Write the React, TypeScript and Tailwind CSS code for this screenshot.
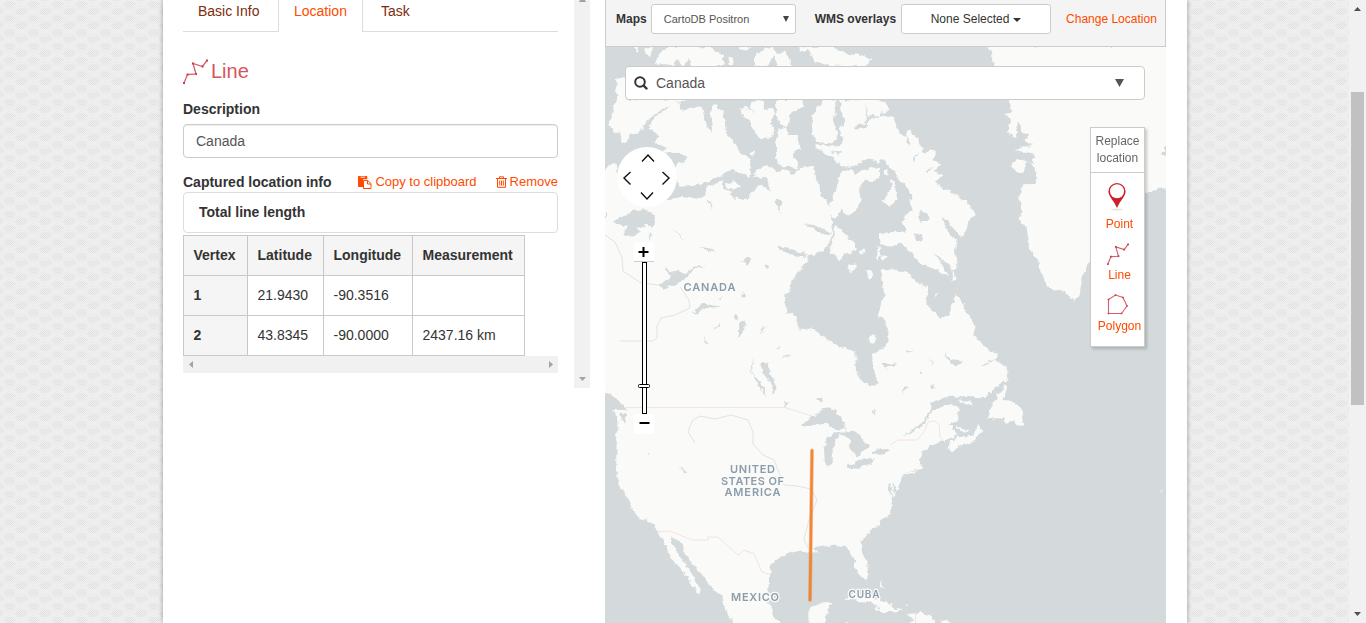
import React from "react";

const LAND = "#fafaf8";
const WATER = "#d4dadc";

type TileProps = { x: number; y: number; w: number; h: number; base: string; children: React.ReactNode };

function Tile({ x, y, w, h, base, children }: TileProps) {
  return (
    <svg x={x} y={y} width={w} height={h} viewBox={`0 0 ${w * 3} ${h * 3}`} overflow="hidden">
      <rect width={w * 3} height={h * 3} fill={base} />
      {children}
    </svg>
  );
}

const L = ({ d }: { d: string }) => <path d={d} fill={LAND} />;
const W = ({ d }: { d: string }) => <path d={d} fill={WATER} />;

function BaseMap() {
  return (
    <svg className="block" width="561" height="576" viewBox="605 47 561 576">
      <defs>
        <filter id="coast" filterUnits="userSpaceOnUse" x="590" y="30" width="590" height="610">
          <feTurbulence type="fractalNoise" baseFrequency="0.16" numOctaves="3" seed="4" />
          <feDisplacementMap in="SourceGraphic" scale="6" xChannelSelector="R" yChannelSelector="G" />
        </filter>
      </defs>
      <rect x="600" y="40" width="570" height="590" fill={WATER} />
      <g filter="url(#coast)">
        <Tile x={600} y={0} w={280} h={200} base={WATER}>
          <L d="M100 140L118 140L112 158ZM138 142L160 142L150 170L135 160ZM165 192L172 170L200 140L335 140L345 156L372 165L372 198L275 198L270 178L248 195L230 178L215 198ZM385 176L395 170L402 188L394 198L385 190ZM462 170L490 150L510 140L535 162L552 155L575 180L575 205L535 200L520 165L505 200L462 200ZM418 140L455 140L435 155ZM598 140L700 140L740 165L770 160L815 180L790 198L700 200L650 185L620 150L600 158Z" />
          <L d="M45 240L77 235L80 300L262 298L225 310L170 338L140 362L130 385L115 402L95 400L70 432L60 400L25 380L38 335L50 290Z" />
          <L d="M145 385L165 348L200 330L218 310L235 308L245 330L290 320L305 320L318 370L334 402L338 370L330 328L345 312L370 335L378 395L400 425L420 460L450 475L452 530L425 520L400 510L375 515L350 535L320 545L270 558L235 560L225 500L265 472L235 455L190 458L205 440L165 430L180 410Z" />
          <L d="M422 325L440 320L465 345L450 320L462 302L490 300L495 330L515 320L525 340L510 370L525 380L520 410L485 418L465 395L450 360L425 345ZM528 300L610 300L612 320L575 335L572 352L560 382L545 375L530 350ZM555 382L568 405L588 405L600 445L575 465L595 485L590 512L575 500L550 502L525 475L535 450L525 425L535 390Z" />
          <L d="M650 320L675 300L710 298L700 370L715 402L700 430L680 432L650 425L638 405L635 365ZM720 300L840 295L840 485L800 480L775 490L755 505L710 490L695 470L650 445L650 432L690 440L720 435L728 410L715 378L728 350Z" />
          <L d="M0 520L45 485L52 520L100 610L0 610ZM180 610L240 588L300 595L325 570L340 555L368 542L370 570L390 575L400 595L440 600L455 570L485 555L510 570L500 535L465 530L468 510L500 495L530 512L555 508L580 525L600 505L640 498L645 535L660 550L668 590L690 610L705 580L718 540L725 515L750 510L765 525L785 510L840 500L840 535L815 545L795 540L775 575L790 610Z" />
          <L d="M318 565L345 550L362 552L345 570L322 575ZM378 552L405 545L420 560L400 570L380 565ZM450 455L462 452L460 466L450 466ZM535 548L560 540L570 560L545 575Z" />
          <W d="M708 350L735 350L732 380L708 372ZM795 310L805 350L840 345L808 362L790 380L800 352ZM690 450L730 458L710 465ZM760 380L790 372L805 378L770 388Z" />
        </Tile>
        <Tile x={880} y={0} w={290} h={200} base={WATER}>
          <L d="M318 138L338 155L336 175L350 210L370 250L388 305L396 335L376 342L392 362L384 400L405 415L416 365L425 400L445 402L440 418L458 435L405 450L462 465L462 490L440 485L430 520L400 510L395 490L420 478L455 490L470 530L462 552L430 553L420 580L415 610L700 610L795 580L870 558L870 138Z" />
          <L d="M-10 300L15 302L30 332L-10 340ZM-10 342L40 350L50 375L60 400L78 410L85 390L112 412L120 435L138 462L150 448L165 455L160 480L185 492L160 515L192 530L165 540L175 560L205 570L240 590L250 610L100 610L90 570L60 545L40 510L10 480L-10 470ZM12 514L24 510L26 524L14 528ZM30 540L44 545L52 600L20 610L15 590L35 570Z" />
          <W d="M855 435L870 430L870 470L840 462L855 455ZM50 370L60 385L55 400ZM80 405L90 430L84 436ZM115 452L100 480L106 482ZM160 500L140 510L145 516Z" />
        </Tile>
        <Tile x={600} y={200} w={280} h={210} base={LAND}>
          <W d="M790 -10L775 20L750 50L722 30L715 50L700 55L695 110L680 140L665 152L618 172L625 182L585 228L570 260L556 288L554 325L562 340L583 340L592 365L593 392L615 385L648 393L680 415L718 445L766 452L768 515L788 545L812 562L832 545L820 500L816 465L850 445L865 425L865 385L832 342L852 300L842 245L860 210L880 215L880 -10Z" />
          <L d="M708 75L730 95L762 130L772 150L735 160L716 182L700 160L688 158L700 115ZM840 105L860 95L880 105L880 135L845 135ZM778 148L800 150L785 162ZM832 140L848 148L842 180L832 172ZM742 200L765 190L773 198L752 218ZM803 215L815 210L820 228L812 238L803 230ZM808 412L826 405L820 430L805 424Z" />
          <W d="M612 72L650 76L690 100L682 106L650 95ZM690 45L722 60L750 85L735 82L700 70ZM530 140L560 142L625 165L605 172L550 155ZM36 65L100 32L130 28L165 42L160 80L140 75L110 82L125 95L90 110L70 102L80 80ZM145 95L155 115L148 118ZM215 82L225 95L260 125L230 105ZM190 198L215 215L235 212L258 222L280 200L310 198L285 208L265 230L235 250L190 266L172 255L205 240L210 225ZM300 145L330 138L345 158L325 150ZM428 185L445 170L455 178L440 200ZM490 190L508 200L502 208ZM275 340L310 310L362 320L320 325L290 340ZM415 410L420 370L436 360L433 388ZM402 352L415 340L412 362ZM475 402L500 376L488 394ZM345 380L360 372L350 385ZM310 405L325 430L318 432ZM425 275L436 292L425 292ZM355 298L368 290L362 300Z" />
          <W d="M482 488L502 490L512 525L528 550L522 582L514 580L515 552L490 525ZM465 478L460 510L448 515L470 530L495 570L495 588L480 560L460 530L455 510ZM652 592L666 590L668 608L655 608ZM550 602L566 605L555 625ZM610 665L650 640L682 620L722 645L730 670L615 670ZM10 578L45 590L60 610L80 625L85 670L10 670ZM528 445L540 440L535 450ZM550 468L572 460L560 470ZM675 0L690 18L700 -5ZM320 -5L340 30L330 -8ZM525 -5L540 40L545 -5ZM15 35L22 50L15 55Z" />
        </Tile>
        <Tile x={880} y={200} w={290} h={210} base={WATER}>
          <L d="M85 -10L250 -10L285 40L265 65L260 85L245 110L225 90L202 65L180 45L195 80L230 125L225 150L232 200L225 210L190 185L160 155L190 200L205 232L170 210L120 190L92 155L60 128L30 140L0 135L0 100L50 95L80 98L65 62L95 30ZM0 -10L50 -10L40 15L20 15ZM0 165L20 168L10 180ZM218 205L228 240L218 245ZM165 280L175 278L170 288Z" />
          <L d="M2 212L35 205L55 215L75 210L110 245L145 265L140 300L150 325L180 355L208 342L228 280L250 320L270 350L285 380L280 405L310 435L350 465L348 480L378 500L382 540L345 565L315 590L260 588L195 592L155 612L130 670L0 670L0 450L25 425L25 390L15 360L0 350L0 320L12 290L10 262L4 240L7 226Z" />
          <L d="M145 650L175 625L210 612L235 620L225 670L140 670ZM375 552L382 560L370 600L410 610L430 640L435 670L318 670L330 635L345 600ZM232 598L262 602L280 615L255 612Z" />
          <L d="M415 -10L425 30L418 60L440 85L450 150L475 185L488 230L510 268L535 268L555 282L585 302L600 280L605 235L620 200L632 180L795 -20L795 -40Z" />
          <W d="M118 25L148 50L140 60L118 62ZM105 100L128 112L125 125L108 122ZM8 488L55 492L30 500L15 505ZM68 585L75 560L88 560ZM195 455L210 478L240 480L252 485L225 498L200 475ZM140 465L158 488L150 500L155 485ZM78 450L100 450L85 458ZM52 412L68 422ZM302 500L345 475L315 500ZM152 548L166 550L164 568L152 568ZM120 515L130 517L125 522Z" />
        </Tile>
        <Tile x={600} y={410} w={280} h={220} base={LAND}>
          <W d="M-10 -10L30 -10L45 10L55 50L50 100L48 180L62 235L85 265L95 295L120 325L145 330L168 350L175 370L195 400L212 445L238 470L260 495L268 515L288 540L298 552L302 540L280 500L265 475L240 440L225 415L213 400L212 382L222 385L245 400L250 425L275 455L300 490L330 525L350 545L370 568L372 590L400 640L410 670L-10 670Z" />
          <W d="M555 670L520 615L508 580L505 535L512 490L508 475L518 458L550 435L600 422L640 433L655 425L638 412L680 406L710 412L735 410L755 430L765 455L765 475L785 505L800 510L805 490L800 455L785 420L782 395L800 368L840 345L880 318L880 670L675 670L675 630L690 578L650 582L625 600L625 635L640 670Z" />
          <L d="M730 570L760 550L800 555L850 575L880 590L880 610L845 595L815 580L765 568ZM825 585L840 600L830 604ZM850 450L858 455ZM718 655L740 635L780 670L700 670Z" />
          <W d="M600 48L635 20L660 5L690 -10L722 18L738 55L715 60L690 50L668 35L645 48ZM678 90L702 70L725 70L710 90L698 120L698 155L688 170L675 165L672 120ZM715 68L765 65L785 85L808 110L770 140L752 118L750 95L735 78ZM742 168L775 150L822 145L805 165L765 176L750 178ZM815 128L840 118L880 115L870 132L820 135ZM240 170L262 188L250 190ZM140 130L148 130L142 135ZM60 10L80 10L75 38L65 25ZM810 -5L830 15L822 -5ZM680 318L692 324ZM188 345L200 354ZM762 335L768 342ZM630 438L650 430L655 418Z" />
        </Tile>
        <Tile x={880} y={410} w={290} h={220} base={WATER}>
          <L d="M-10 340L25 318L38 290L35 265L50 240L68 210L72 190L110 180L128 172L120 150L130 125L155 106L190 94L230 75L222 55L205 45L235 30L235 -10L165 -10L130 45L90 72L70 80L125 40L155 -10L-10 -10Z" />
          <L d="M232 82L250 80L290 76L285 92L238 110L215 125L203 115L210 95ZM280 75L295 42L308 65L295 78ZM320 25L335 -10L425 -10L432 45L415 48L400 30L380 42L375 25ZM228 45L250 58L270 60L255 68L235 60ZM70 190L110 183L85 195Z" />
          <L d="M-10 568L20 580L65 602L30 606L-10 605ZM80 612L130 608L165 630L165 650L60 650L105 630ZM185 632L212 632L212 650L185 650ZM-5 515L5 515L8 535L-2 530ZM75 585L88 583L80 588ZM840 238L855 240L845 244Z" />
          <W d="M-10 115L20 115L30 122L15 132L-10 128ZM25 220L34 220L36 268L28 245ZM42 215L50 240L40 250Z" />
        </Tile>
      </g>
      <g fill="none" strokeWidth="0.7" stroke="#d4dadc">
        <path d="M605 235L615 242L622 257L623 271L641 283L658 285M680 287L689 300L690 308L675 315L661 318L657 326L657 338L653 341L620 341" />
        <path d="M695 443L688 432L692 421L700 416L715 419L731 415L748 420L753 432L753 444L763 455L774 460L780 475L784 485L797 486L811 489L817 500L809 520L804 539L808 548" />
      </g>
      <g fill="none" strokeWidth="0.8" stroke="#f1dddb">
        <path d="M626 407.500L785 407.500L812 416M658 532L670 531L692 540L708 540L708 537L718 537L728 546L738 555L744 550L754 554L762 572L771 575M890 445L898 440L917 440L924 432L928 422L935 421L939 424L940 437L943 441" />
        <path d="M915.500 612L915.500 623" />
      </g>
      <g fontFamily='Inter, "Open Sans", sans-serif' fontWeight="600" fontSize="11" fill="#8b9dab" stroke={LAND} strokeWidth="2.500" paintOrder="stroke" strokeLinejoin="round">
        <text x="683.500" y="290.500" textLength="52">CANADA</text>
        <text x="730" y="473" textLength="45">UNITED</text>
        <text x="721" y="484.500" textLength="63">STATES OF</text>
        <text x="724.500" y="496" textLength="56">AMERICA</text>
        <text x="731" y="601" textLength="48">MEXICO</text>
        <text x="848.500" y="597.500" fontSize="10" textLength="31">CUBA</text>
      </g>
      <path d="M812 450.500L810 600" stroke="#ee7d25" strokeOpacity="0.4" strokeWidth="4" strokeLinecap="round" />
      <path d="M812 450.500L810 600" stroke="#ee7d25" strokeOpacity="0.85" strokeWidth="2.600" strokeLinecap="round" />
    </svg>
  );
}

function LineIcon({ size }: { size: number }) {
  return (
    <svg width={size} height={size} viewBox="0 0 25 25" fill="none" stroke="#d4606a" strokeWidth="1.300">
      <path d="M1 24L4.500 15.500L13 15L10 4.500L19.500 7.500L24 1.500" />
      <path stroke="#c8404a" strokeWidth="2" strokeLinecap="square" d="M1 24h.01M4.500 15.500h.01M13 15h.01M10 4.500h.01M19.500 7.500h.01M24 1.500h.01" />
    </svg>
  );
}

function PointIcon() {
  return (
    <svg width="20" height="29" viewBox="0 0 20 29">
      <ellipse cx="10" cy="27.500" rx="6" ry="1" fill="#e6e6e6" />
      <path d="M10 1a8.600 8.600 0 0 0-8.600 8.600C1.400 14 6 17.500 10 26c4-8.500 8.600-12 8.600-16.400A8.600 8.600 0 0 0 10 1z" fill="#cb2029" />
      <circle cx="10" cy="9.300" r="7" fill="#fff" />
    </svg>
  );
}

function PolygonIcon() {
  return (
    <svg width="21" height="21" viewBox="0 0 21 21" fill="none" stroke="#d5606a" strokeWidth="1.100">
      <path d="M1.500 19.500V5.500L8.500 1L16 3.500L20 12L14.500 19.500Z" />
      <path stroke="#c8404a" strokeWidth="1.600" strokeLinecap="square" d="M1.500 19.500h.01M1.500 5.500h.01M8.500 1h.01M16 3.500h.01M20 12h.01M14.500 19.500h.01" />
    </svg>
  );
}

function PasteIcon() {
  return (
    <svg width="14" height="13" viewBox="0 0 14 13">
      <path d="M.8 0H8.500Q9.300 0 9.300 .8V3.200H5.800Q5 3.200 5 4V11H.8Q0 11 0 10.200V.8Q0 0 .8 0Z" fill="#ff4b00" />
      <path d="M2.500 1.200H7" stroke="#fff" strokeWidth="0.900" />
      <path d="M5.500 4.500H9.700L13 7.700V12.500H5.500ZM9.500 4.500V8H13" fill="#fff" stroke="#ff4b00" />
    </svg>
  );
}

function TrashIcon() {
  return (
    <svg width="11" height="12" viewBox="0 0 11 12" fill="none" stroke="#ff4b00">
      <path d="M0 2.500H11M3.500 2.500V.8H7.500V2.500M1.500 2.500V11.300H9.500V2.500M3.700 4.500V9.500M5.500 4.500V9.500M7.300 4.500V9.500" />
    </svg>
  );
}

function SearchIcon() {
  return (
    <svg width="14" height="14" viewBox="0 0 14 14" fill="none" stroke="#333" strokeWidth="2">
      <circle cx="6" cy="6" r="4.800" />
      <path d="M9.500 9.500L12.500 12.500" strokeWidth="2.400" strokeLinecap="round" />
    </svg>
  );
}

function Weave() {
  return (
    <svg className="absolute inset-0 h-full w-full">
      <defs>
        <pattern id="dots" width="2" height="2" patternUnits="userSpaceOnUse">
          <rect width="1" height="1" fill="#dfdfdf" />
          <rect x="1" y="1" width="1" height="1" fill="#e4e4e4" />
        </pattern>
        <pattern id="scales" width="24" height="14" patternUnits="userSpaceOnUse">
          <rect width="24" height="14" fill="#eeeeee" />
          <path d="M3 4L7 1H12L16 4L13 8H6ZM15 11L19 8H24V14H17ZM0 8L4 11L1 14H0ZM18 0H24V1H18Z" fill="url(#dots)" />
          <path d="M0 6.500L4 9.500H12L16 6.500L20 6.500L24 6.500" fill="none" stroke="#e7e7e7" strokeDasharray="1 1" />
        </pattern>
      </defs>
      <rect width="100%" height="100%" fill="url(#scales)" />
    </svg>
  );
}

const Th = ({ children }: { children: React.ReactNode }) => (
  <th className="h-10 border border-[#c8c8c8] bg-[#f5f5f5] px-[9.5px] text-left font-bold">{children}</th>
);
const Td = ({ children }: { children?: React.ReactNode }) => (
  <td className="h-10 border border-[#c8c8c8] px-[9.5px]">{children}</td>
);

function LocationForm() {
  return (
    <section className="flex h-[388px] w-[375px] shrink-0 flex-col">
      <nav className="flex h-8 shrink-0 leading-[22px]">
        <div className="w-24 border-r border-b border-[#ddd] pl-[15px] text-[#7e2a0b]">Basic Info</div>
        <div className="w-[84px] border-r border-[#ddd] pl-[15px] text-[#ff4b00]">Location</div>
        <div className="flex-1 border-b border-[#ddd] pl-[18px] text-[#7e2a0b]">Task</div>
      </nav>
      <h2 className="mt-[27px] flex h-[25px] items-center gap-[3px] text-[20px] text-[#d9535c]">
        <LineIcon size={25} />
        <span className="pb-[2px] leading-6">Line</span>
      </h2>
      <label className="mt-[15px] h-[25px] leading-5 font-bold">Description</label>
      <div className="flex h-[34px] shrink-0 items-center rounded border border-[#ccc] px-3 text-[#555] shadow-[inset_0_1px_1px_rgba(0,0,0,0.075)]">Canada</div>
      <div className="mt-[14px] flex h-5 shrink-0 items-center">
        <span className="font-bold">Captured location info</span>
        <span className="ml-auto flex items-center gap-[3px] text-[13px] text-[#ff4b00]">
          <PasteIcon />
          Copy to clipboard
        </span>
        <span className="ml-[19px] flex items-center gap-[3px] text-[13px] text-[#ff4b00]">
          <TrashIcon />
          Remove
        </span>
      </div>
      <div className="flex h-[41px] shrink-0 items-center rounded border border-[#ddd] px-[15px] font-bold">Total line length</div>
      <table className="mt-[2px] w-[342px] table-fixed border-collapse">
        <colgroup>
          <col className="w-16" />
          <col className="w-[76px]" />
          <col className="w-[89px]" />
          <col className="w-28" />
        </colgroup>
        <tbody>
          <tr><Th>Vertex</Th><Th>Latitude</Th><Th>Longitude</Th><Th>Measurement</Th></tr>
          <tr><Th>1</Th><Td>21.9430</Td><Td>-90.3516</Td><Td /></tr>
          <tr><Th>2</Th><Td>43.8345</Td><Td>-90.0000</Td><Td>2437.16 km</Td></tr>
        </tbody>
      </table>
      <div className="flex h-[17px] shrink-0 items-center justify-between bg-[#f1f1f1] pr-[5px] pl-[6px]">
        <svg width="4" height="7"><path d="M4 0V7L0 3.500Z" fill="#a3a3a3" /></svg>
        <svg width="4" height="7"><path d="M0 0V7L4 3.500Z" fill="#a3a3a3" /></svg>
      </div>
    </section>
  );
}

function MapPanel() {
  return (
    <section className="ml-[15px] w-[561px] shrink-0">
      <div className="flex h-[47px] border-x border-b border-[#ccc] bg-[#f4f4f4] pt-1 text-[12px]">
        <b className="ml-[10px] leading-[30px]">Maps</b>
        <div className="ml-1 flex h-[30px] w-[145px] items-center justify-between rounded-[3px] border border-[#ccc] bg-white pr-[6px] pl-3 text-[11px] text-[#555]">
          CartoDB Positron
          <svg width="6" height="6"><path d="M0 0H6L3 6Z" fill="#444" /></svg>
        </div>
        <b className="ml-[19px] leading-[30px]">WMS overlays</b>
        <div className="ml-[5px] flex h-[30px] w-[150px] items-center justify-center gap-1 rounded-[3px] border border-[#ccc] bg-white">
          None Selected
          <svg width="8" height="4" className="mt-[2px]"><path d="M0 0H8L4 4Z" fill="#333" /></svg>
        </div>
        <span className="ml-[15px] leading-[30px] text-[#ff4b00]">Change Location</span>
      </div>
      <div className="relative h-[576px] overflow-hidden bg-[#d4dadc]">
        <BaseMap />
        <div className="absolute top-[19px] left-5 flex h-[34px] w-[520px] items-center rounded border border-[#ccc] bg-white pr-5 pl-2 text-[#555]">
          <SearchIcon />
          <span className="ml-2">Canada</span>
          <svg width="9" height="8" className="ml-auto"><path d="M0 0H9L4.500 8Z" fill="#555" /></svg>
        </div>
        <svg className="absolute top-[100px] left-[12px]" width="60" height="60" fill="none" stroke="#111" strokeWidth="1.400">
          <circle cx="30" cy="30" r="30" fill="#fff" stroke="none" />
          <path d="M25 14.500L31 8L37 14.500M24 45.500L30 52L36 45.500M13.500 25L7 31L13.500 37.500M45.500 25L52 31L45.500 37.500" />
        </svg>
        <svg className="absolute top-[194px] left-[28px]" width="24" height="194">
          <rect x="1" y="1" width="20" height="20" fill="#fff" />
          <path d="M1 20.500H21" stroke="#ccc" />
          <path d="M5.500 11H15.500M10.500 6V16" stroke="#000" strokeWidth="2" />
          <rect x="1" y="173" width="20" height="20" rx="2" fill="#fff" />
          <path d="M6.500 182H16.500" stroke="#000" strokeWidth="2" />
          <rect x="9.500" y="21.500" width="4" height="151" fill="#fff" stroke="#000" />
          <rect x="5.500" y="143.500" width="11" height="3" rx="1" fill="#fff" stroke="#000" />
        </svg>
        <div className="absolute top-20 left-[485px] flex h-[220px] w-[55px] flex-col items-center border border-[#ccc] bg-white text-[12px] text-[#ff4b00] shadow-[2px_2px_3px_rgba(0,0,0,0.2)]">
          <div className="h-[45px] w-full border-b border-[#ccc] pt-[5px] text-center leading-[17px] text-[#666]">Replace<br />location</div>
          <div className="mt-[9px] flex flex-col items-center leading-[17px]">
            <PointIcon />
            <span className="mt-[5px] ml-[4px]">Point</span>
          </div>
          <div className="mt-[10px] flex flex-col items-center leading-[17px]">
            <LineIcon size={22} />
            <span className="mt-[2px] ml-[4px]">Line</span>
          </div>
          <div className="mt-[10px] flex flex-col items-center leading-[17px]">
            <PolygonIcon />
            <span className="mt-[3px] ml-[4px]">Polygon</span>
          </div>
        </div>
      </div>
    </section>
  );
}

export default function App() {
  return (
    <div className="relative flex h-[623px] w-[1366px] overflow-hidden bg-[#ededed] font-['Liberation_Sans',Arial,sans-serif] text-[14px] text-[#333]">
      <Weave />
      <main className="relative ml-[163px] flex w-[1024px] shrink-0 bg-white pl-5 shadow-[0_0_5px_rgba(0,0,0,0.35)]">
        <LocationForm />
        <div className="ml-4 flex h-[388px] w-4 shrink-0 flex-col items-center justify-between bg-[#f1f1f1] pb-[7px]">
          <svg width="7" height="2"><path d="M1 0H6L7 2H0Z" fill="#a3a3a3" /></svg>
          <svg width="7" height="4"><path d="M0 0H7L3.500 4Z" fill="#a3a3a3" /></svg>
        </div>
        <MapPanel />
      </main>
      <aside className="relative ml-auto flex w-[17px] flex-col items-center bg-[#f1f1f1]">
        <svg width="7" height="4" className="mt-[7px]"><path d="M0 4H7L3.500 0Z" fill="#505050" /></svg>
        <div className="mt-[81px] h-[313px] w-[13px] bg-[#c1c1c1]" />
        <svg width="7" height="4" className="mt-auto mb-[7px]"><path d="M0 0H7L3.500 4Z" fill="#505050" /></svg>
      </aside>
    </div>
  );
}
